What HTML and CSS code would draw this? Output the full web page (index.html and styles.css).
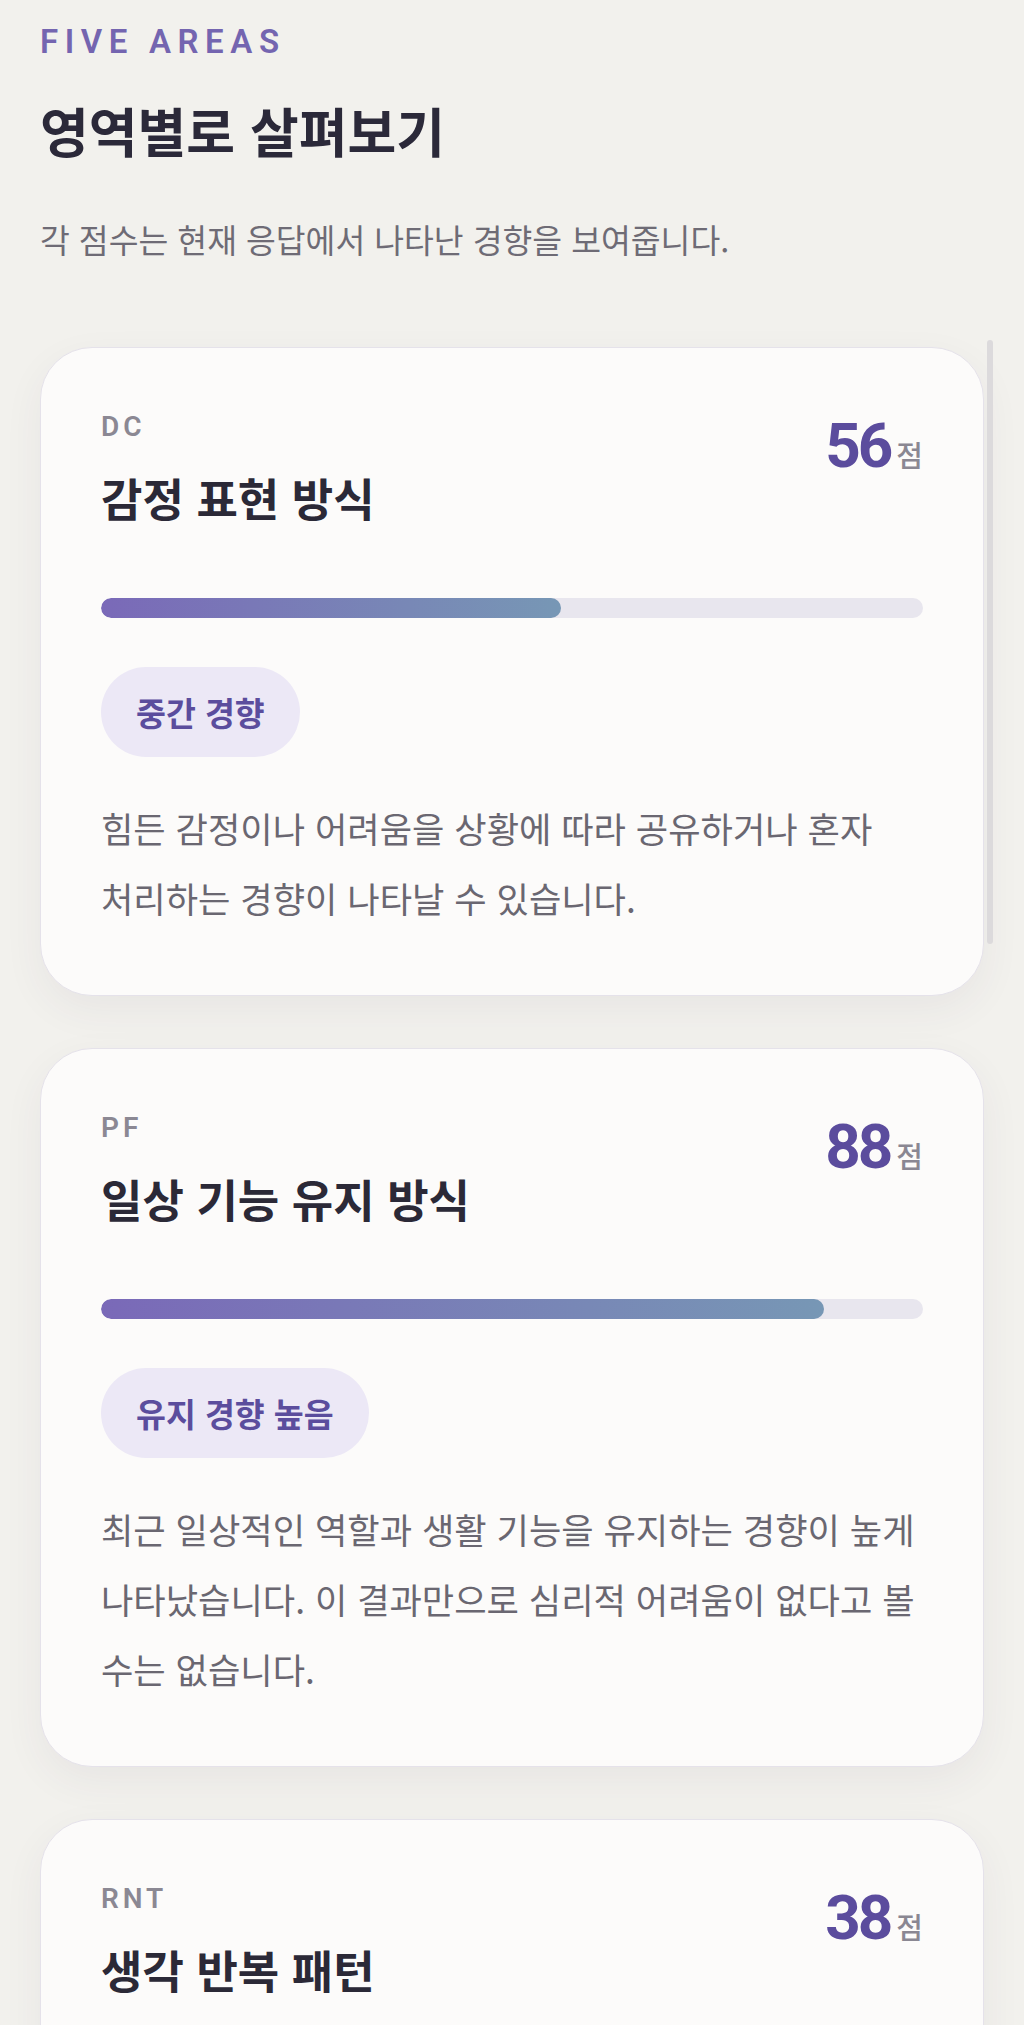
FILE: index.html
```html
<!DOCTYPE html>
<html lang="ko">
    <head>
        <meta charset="utf-8">
        <title>영역별로 살펴보기</title>

        <link rel="stylesheet" href="styles.css">
    </head>
    <body>
        <div class="page">
            <p class="eyebrow">FIVE AREAS</p>
            <h1 class="page-title">영역별로 살펴보기</h1>
            <p class="page-desc">각 점수는 현재 응답에서 나타난 경향을 보여줍니다.</p>

            <div class="area-list">
                <div class="area-card">
                    <div class="area-head">
                        <div>
                            <div class="area-code">DC</div>
                            <h2 class="area-title">감정 표현 방식</h2>
                        </div>
                        <div class="score"><span class="score-num">56</span><span class="score-unit">점</span></div>
                    </div>
                    <div class="bar"><div class="bar-fill" style="width: 56%"></div></div>
                    <span class="badge">중간 경향</span>
                    <p class="area-text">힘든 감정이나 어려움을 상황에 따라 공유하거나 혼자 처리하는 경향이 나타날 수 있습니다.</p>
                </div>

                <div class="area-card">
                    <div class="area-head">
                        <div>
                            <div class="area-code">PF</div>
                            <h2 class="area-title">일상 기능 유지 방식</h2>
                        </div>
                        <div class="score"><span class="score-num">88</span><span class="score-unit">점</span></div>
                    </div>
                    <div class="bar"><div class="bar-fill" style="width: 88%"></div></div>
                    <span class="badge">유지 경향 높음</span>
                    <p class="area-text">최근 일상적인 역할과 생활 기능을 유지하는 경향이 높게 나타났습니다. 이 결과만으로 심리적 어려움이 없다고 볼 수는 없습니다.</p>
                </div>

                <div class="area-card">
                    <div class="area-head">
                        <div>
                            <div class="area-code">RNT</div>
                            <h2 class="area-title">생각 반복 패턴</h2>
                        </div>
                        <div class="score"><span class="score-num">38</span><span class="score-unit">점</span></div>
                    </div>
                    <div class="bar"><div class="bar-fill" style="width: 38%"></div></div>
                    <span class="badge">반복 경향 낮음</span>
                    <p class="area-text">같은 생각이 머릿속에서 반복되는 경향이 비교적 낮게 나타났습니다.</p>
                </div>
            </div>
        </div>

        <div class="scroll-thumb"></div>
    </body>
</html>
```

FILE: styles.css
```css
body {
    margin: 0;
    background-color: #f2f1ed;
    font-family: "Noto Sans CJK KR", sans-serif;
    color: #2c2a3a;
}
.page {
    padding: 22px 40px 60px;
}
.eyebrow {
    margin: 0;
    font-family: Roboto, "Noto Sans CJK KR", sans-serif;
    font-size: 33px;
    line-height: 40px;
    font-weight: 600;
    letter-spacing: 0.2em;
    color: #7465b0;
}
.page-title {
    margin: 36px 0 0;
    font-size: 53px;
    line-height: 64px;
    font-weight: 700;
    color: #2b2939;
}
.page-desc {
    margin: 57px 0 0;
    font-size: 32.4px;
    line-height: 40px;
    color: #6e6b75;
}

/* cards */
.area-list {
    margin-top: 88px;
    display: flex;
    flex-direction: column;
    gap: 52px;
}
.area-card {
    background-color: #fcfbfa;
    border: 1px solid #e5e2ea;
    border-radius: 52px;
    padding: 62px 60px;
    box-shadow: 0 14px 40px rgba(60, 50, 80, 0.06);
}
.area-head {
    display: flex;
    justify-content: space-between;
    align-items: flex-start;
}
.area-code {
    font-family: Roboto, sans-serif;
    font-size: 28px;
    line-height: 34px;
    font-weight: 600;
    letter-spacing: 0.14em;
    color: #8b8893;
}
.area-title {
    margin: 26px 0 0;
    font-size: 45px;
    line-height: 56px;
    font-weight: 700;
    color: #2b2937;
}
.score {
    display: flex;
    align-items: baseline;
    margin-top: 5px;
}
.score-num {
    font-family: Roboto, sans-serif;
    font-size: 62px;
    line-height: 62px;
    font-weight: 700;
    letter-spacing: -0.05em;
    color: #5b4c9d;
}
.score-unit {
    margin-left: 6px;
    font-size: 29px;
    line-height: 34px;
    font-weight: 500;
    color: #8a8792;
}

.bar {
    margin-top: 72px;
    height: 20px;
    border-radius: 10px;
    background-color: #e8e6ee;
    overflow: hidden;
}
.bar-fill {
    height: 100%;
    border-radius: 10px;
    background: linear-gradient(90deg, #7a69b8, #7797b5);
}

.badge {
    display: block;
    width: fit-content;
    margin-top: 49px;
    padding: 27px 35px;
    border-radius: 45px;
    background-color: #ece8f6;
    color: #5b4d9d;
    font-size: 32.5px;
    line-height: 36px;
    font-weight: 700;
}
.area-text {
    margin: 36px 0 0;
    font-size: 35.2px;
    line-height: 70px;
    color: #6a6771;
    word-break: keep-all;
}

/* overlay scroll indicator */
.scroll-thumb {
    position: fixed;
    left: 987px;
    top: 340px;
    width: 6px;
    height: 604px;
    border-radius: 3px;
    background-color: #dcdadc;
}
```
